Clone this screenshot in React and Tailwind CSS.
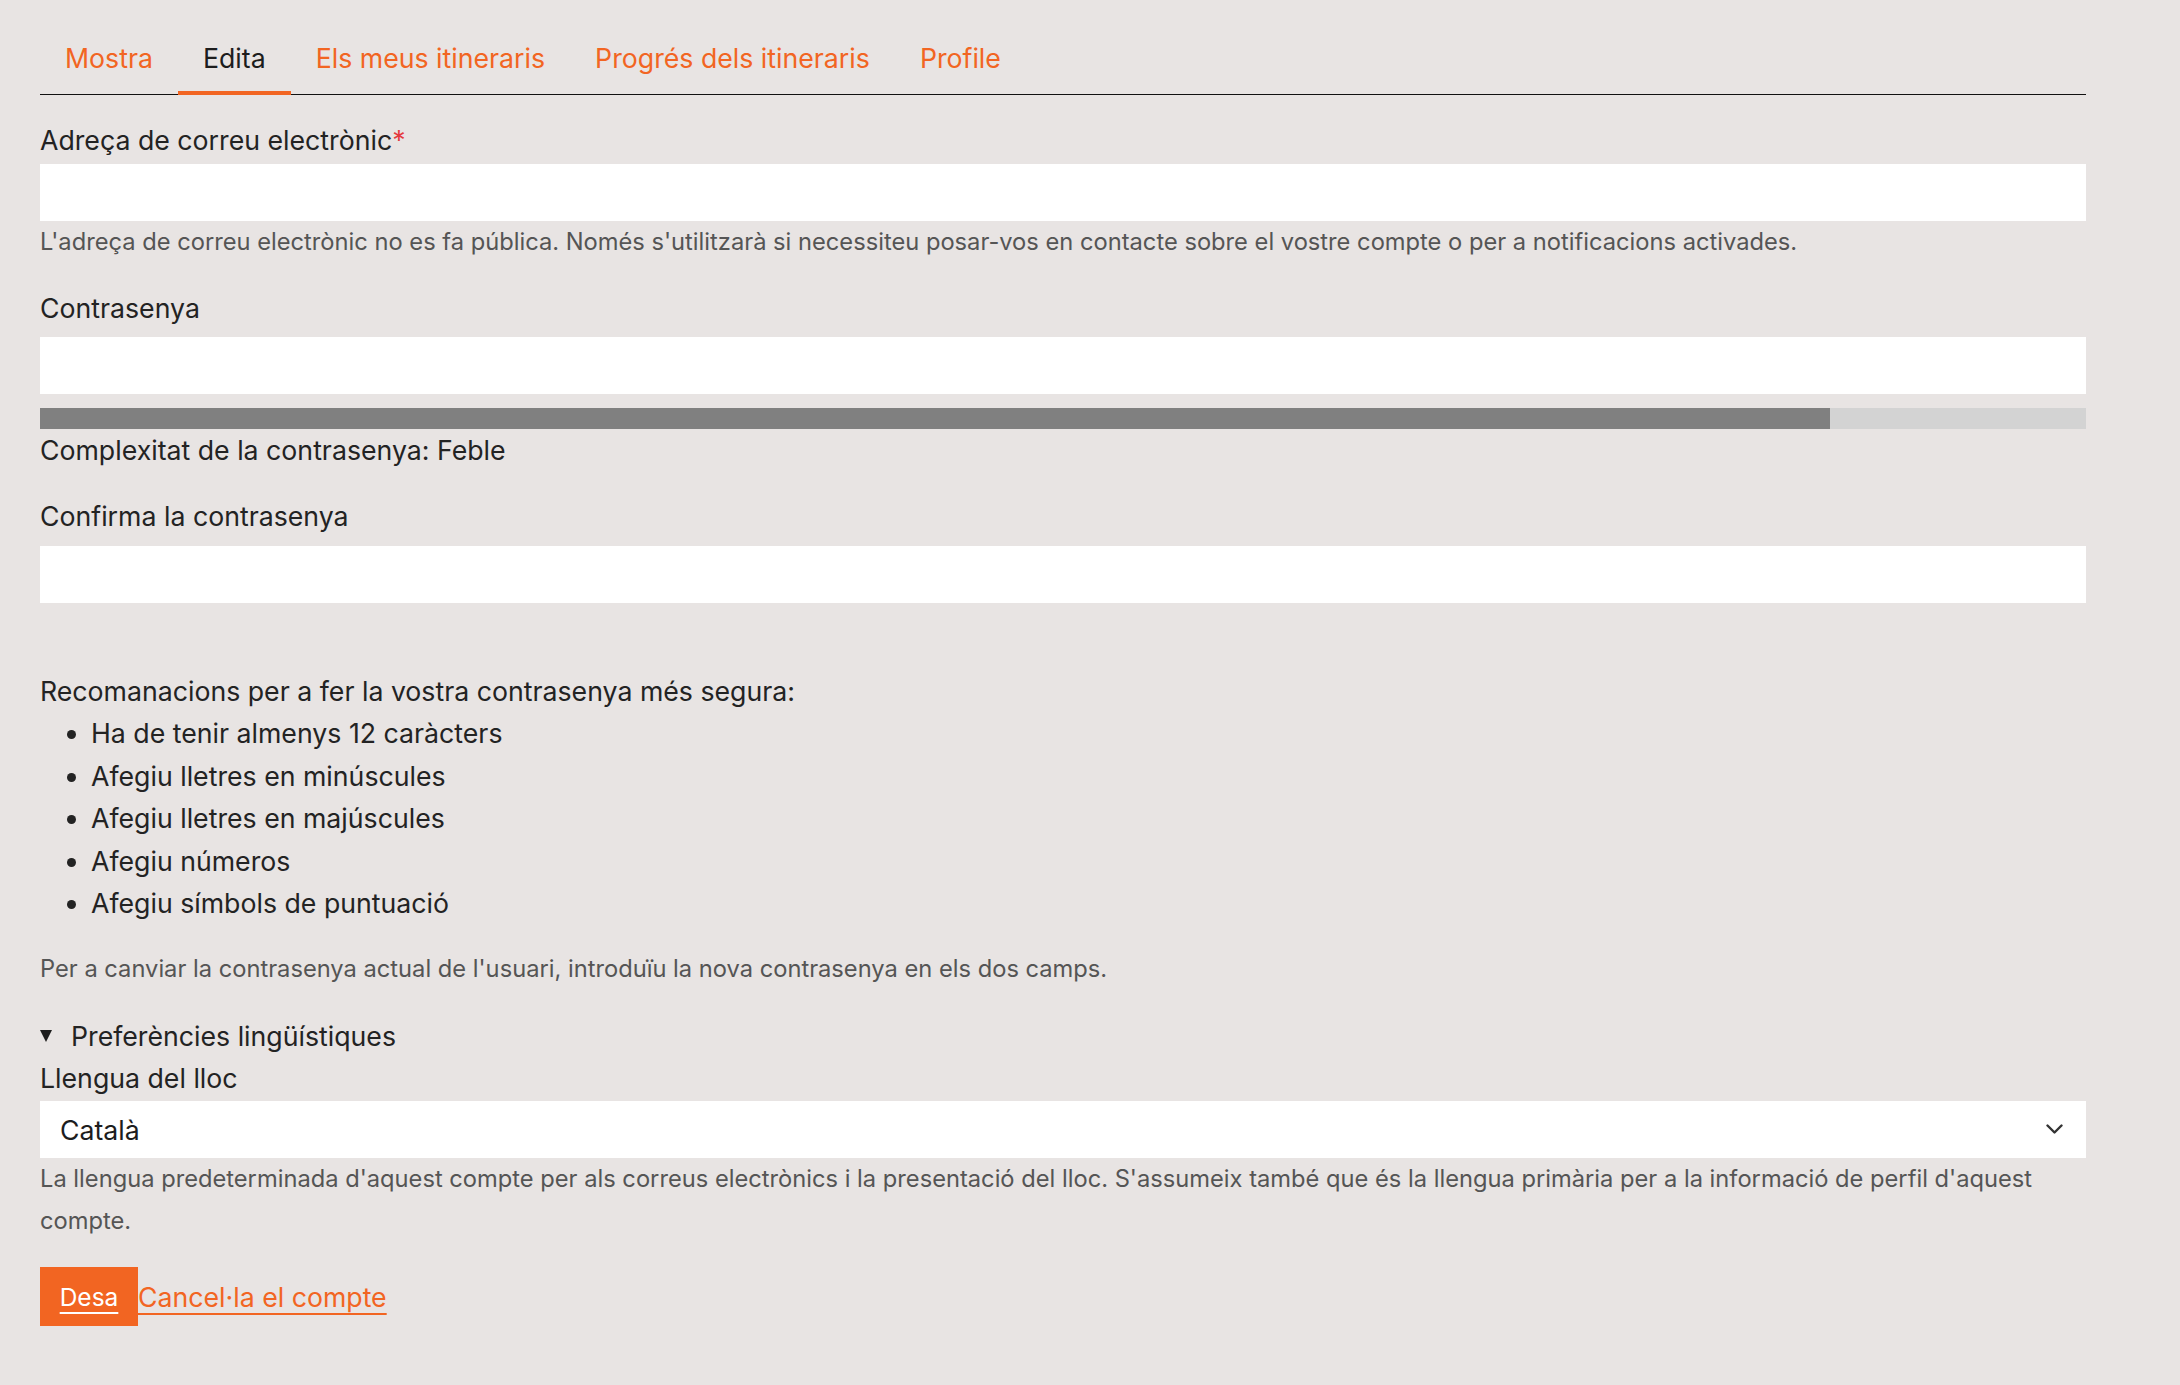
import React from "react";

const font = { fontFamily: "Inter, 'Noto Sans', sans-serif" };

function Tab({ label, active }) {
  return (
    <div
      className={
        "-mb-px border-b-4 px-[25px] pt-[37px] pb-[12px] text-[26.7px] leading-[42px] " +
        (active ? "border-[#f26522] text-[#1d1d1d]" : "border-transparent text-[#f26522]")
      }
    >
      {label}
    </div>
  );
}

export default function App() {
  return (
    <div className="min-h-screen w-full bg-[#e8e4e3] text-[#232323]" style={font}>
      <div className="pl-[40px] pr-[94px] pb-[58px]">
        <nav className="flex border-b border-[#111]">
          <Tab label="Mostra" />
          <Tab label="Edita" active />
          <Tab label="Els meus itineraris" />
          <Tab label="Progrés dels itineraris" />
          <Tab label="Profile" />
        </nav>

        <div className="mt-[24px] text-[26.7px] leading-[42px]">
          Adreça de correu electrònic<span className="text-[#e5393e]">*</span>
        </div>
        <div className="mt-[3px] h-[57px] bg-white" />
        <div className="text-[23.7px] leading-[42px] text-[#555]">
          L'adreça de correu electrònic no es fa pública. Només s'utilitzarà si necessiteu posar-vos en contacte sobre el vostre compte o per a notificacions activades.
        </div>

        <div className="mt-[24px] text-[26.7px] leading-[42px]">Contrasenya</div>
        <div className="mt-[8px] h-[57px] bg-white" />
        <div className="mt-[14px] h-[21px] bg-[#d3d3d3]">
          <div className="h-full bg-[#808080]" style={{ width: "87.5%" }} />
        </div>
        <div className="text-[26.7px] leading-[42px]">Complexitat de la contrasenya: Feble</div>

        <div className="mt-[24px] text-[26.7px] leading-[42px]">Confirma la contrasenya</div>
        <div className="mt-[9px] h-[57px] bg-white" />

        <div className="mt-[67px] text-[26.7px] leading-[42.4px]">
          <div>Recomanacions per a fer la vostra contrasenya més segura:</div>
          <ul className="list-disc pl-[51px]">
            <li>Ha de tenir almenys 12 caràcters</li>
            <li>Afegiu lletres en minúscules</li>
            <li>Afegiu lletres en majúscules</li>
            <li>Afegiu números</li>
            <li>Afegiu símbols de puntuació</li>
          </ul>
        </div>

        <div className="mt-[24px] text-[23.7px] leading-[42px] text-[#555]">
          Per a canviar la contrasenya actual de l'usuari, introduïu la nova contrasenya en els dos camps.
        </div>

        <div className="mt-[25px] flex items-center text-[26.7px] leading-[42px]">
          <span className="mr-[19px] inline-block h-0 w-0 border-x-[6.5px] border-t-[12px] border-x-transparent border-t-[#1d1d1d]" />
          <span>Preferències lingüístiques</span>
        </div>
        <div className="text-[26.7px] leading-[42px]">Llengua del lloc</div>
        <div className="mt-[2px] flex h-[57px] items-center justify-between bg-white pl-[20px] pr-[23px]">
          <span className="text-[26.7px] leading-[42px] text-[#1d1d1d]">Català</span>
          <svg width="17" height="11" viewBox="0 0 17 11" fill="none">
            <path d="M1.5 1.5 L8.5 8.5 L15.5 1.5" stroke="#333" strokeWidth="2.4" strokeLinecap="round" strokeLinejoin="round" />
          </svg>
        </div>
        <div className="text-[23.7px] leading-[42px] text-[#555]">
          La llengua predeterminada d'aquest compte per als correus electrònics i la presentació del lloc. S'assumeix també que és la llengua primària per a la informació de perfil d'aquest compte.
        </div>

        <div className="mt-[25px] flex items-center">
          <button className="h-[59px] w-[98px] bg-[#f26522] text-center text-[24.5px] leading-[42px] text-white underline underline-offset-[6px]">
            Desa
          </button>
          <a className="pt-[1px] text-[26.7px] leading-[42px] text-[#f26522] underline underline-offset-[6px]" href="#">
            Cancel·la el compte
          </a>
        </div>
      </div>
    </div>
  );
}
